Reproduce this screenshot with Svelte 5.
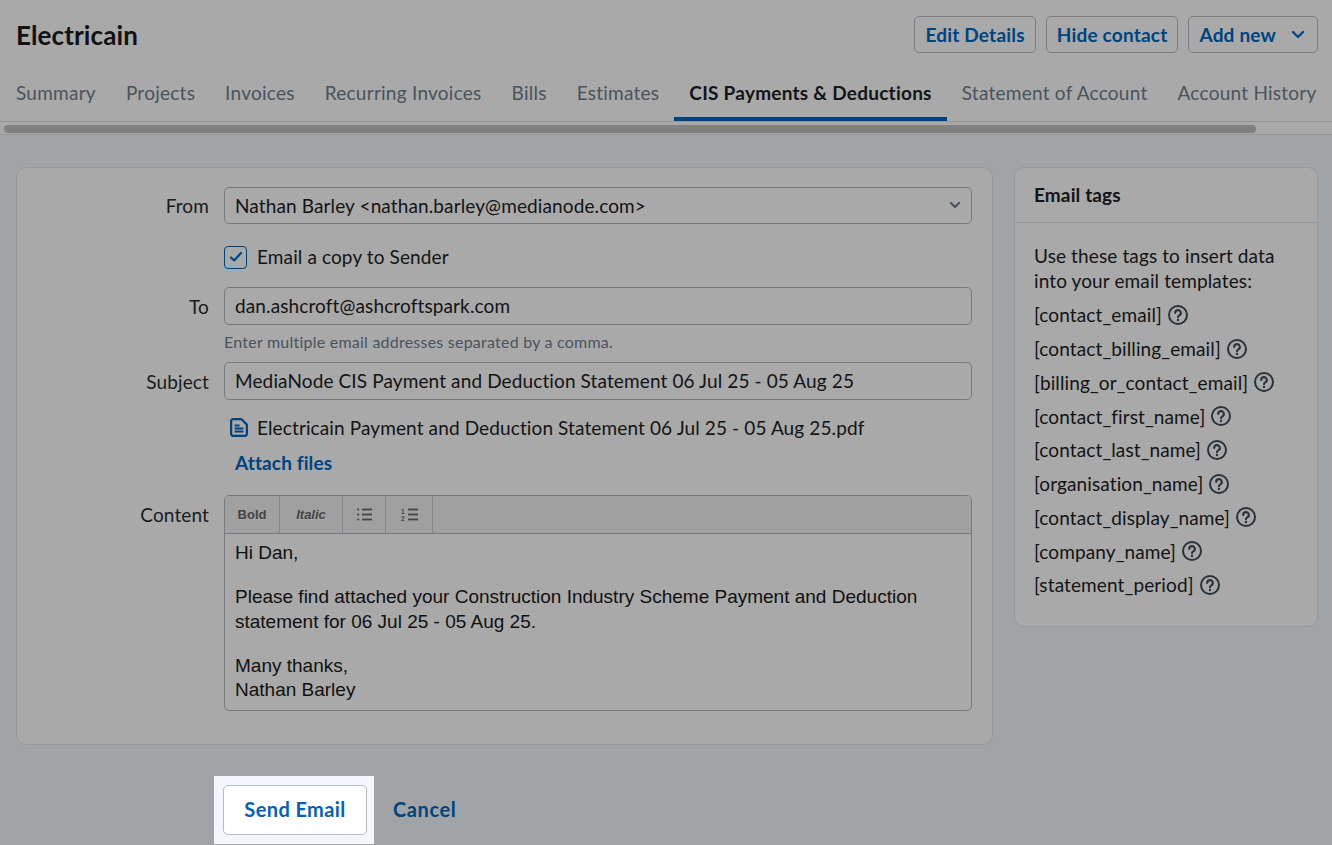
<script>
	const tabs = ['Summary', 'Projects', 'Invoices', 'Recurring Invoices', 'Bills', 'Estimates', 'CIS Payments & Deductions', 'Statement of Account', 'Account History'];
	const activeTab = 'CIS Payments & Deductions';
	const tags = ['contact_email', 'contact_billing_email', 'billing_or_contact_email', 'contact_first_name', 'contact_last_name', 'organisation_name', 'contact_display_name', 'company_name', 'statement_period'];
</script>

<div class="page">
	<header class="header">
		<div class="title-row">
			<h1>Electricain</h1>
			<div class="actions">
				<button class="btn" type="button">Edit Details</button>
				<button class="btn" type="button">Hide contact</button>
				<button class="btn add" type="button">
					Add new
					<svg width="14" height="9" viewBox="0 0 14 9" fill="none" stroke="currentColor" stroke-width="2.2" stroke-linecap="round" stroke-linejoin="round"><path d="M2 2l5 5 5-5"/></svg>
				</button>
			</div>
		</div>
		<nav class="tabs">
			{#each tabs as tab}
				<span class="tab" class:active={tab === activeTab}>{tab}</span>
			{/each}
		</nav>
		<div class="scroll-track"><div class="scroll-thumb"></div></div>
	</header>

	<main class="content">
		<section class="card form">
			<span class="label">From</span>
			<div class="field select">
				Nathan Barley &lt;nathan.barley@medianode.com&gt;
				<svg width="12" height="8" viewBox="0 0 12 8" fill="none" stroke="#6f7f8c" stroke-width="2.2" stroke-linecap="round" stroke-linejoin="round"><path d="M2 2l4 4 4-4"/></svg>
			</div>

			<div class="check-row">
				<span class="checkbox">
					<svg width="14" height="12" viewBox="0 0 14 12" fill="none" stroke="currentColor" stroke-width="2.2" stroke-linecap="round" stroke-linejoin="round"><path d="M2 6.5l3.2 3L12 2"/></svg>
				</span>
				Email a copy to Sender
			</div>

			<span class="label">To</span>
			<div class="field">dan.ashcroft@ashcroftspark.com</div>
			<p class="hint">Enter multiple email addresses separated by a comma.</p>

			<span class="label">Subject</span>
			<div class="field">MediaNode CIS Payment and Deduction Statement 06 Jul 25 - 05 Aug 25</div>

			<div class="attachment">
				<svg width="18" height="19" viewBox="0 0 18 19" fill="none" stroke="currentColor" stroke-width="2.2" stroke-linejoin="round"><path d="M1.1 3.2a2 2 0 0 1 2-2h8.4l5.4 5.4v9.2a2 2 0 0 1-2 2H3.1a2 2 0 0 1-2-2z"/><path d="M4.6 7.5h5M4.6 10.5h8.8M4.6 13.5h8.8" stroke-width="1.8"/></svg>
				<span>Electricain Payment and Deduction Statement 06 Jul 25 - 05 Aug 25.pdf</span>
			</div>
			<a class="attach" href="#attach">Attach files</a>

			<span class="label content-label">Content</span>
			<div class="editor">
				<div class="toolbar">
					<span class="tool bold">Bold</span>
					<span class="tool italic">Italic</span>
					<span class="tool list">
						<svg width="15" height="13" viewBox="0 0 15 13" fill="#666"><circle cx="1.2" cy="1.5" r="1.1"/><circle cx="1.2" cy="6.5" r="1.1"/><circle cx="1.2" cy="11.5" r="1.1"/><rect x="5" y="0.6" width="10" height="1.8"/><rect x="5" y="5.6" width="10" height="1.8"/><rect x="5" y="10.6" width="10" height="1.8"/></svg>
					</span>
					<span class="tool list">
						<svg width="17" height="13" viewBox="0 0 17 13" fill="#666"><text x="0" y="5.5" font-size="6.5" font-weight="700" font-family="Liberation Sans">1</text><text x="0" y="12.5" font-size="6.5" font-weight="700" font-family="Liberation Sans">2</text><rect x="7" y="0.6" width="10" height="1.8"/><rect x="7" y="5.6" width="10" height="1.8"/><rect x="7" y="10.6" width="10" height="1.8"/></svg>
					</span>
				</div>
				<div class="editor-body">
					<p>Hi Dan,</p>
					<p>Please find attached your Construction Industry Scheme Payment and Deduction statement for 06 Jul 25 - 05 Aug 25.</p>
					<p>Many thanks,<br>Nathan Barley</p>
				</div>
			</div>
		</section>

		<aside class="card tags">
			<h2>Email tags</h2>
			<div class="tags-body">
				<p>Use these tags to insert data into your email templates:</p>
				<ul>
					{#each tags as tag}
						<li>
							[{tag}]
							<svg width="20" height="20" viewBox="0 0 20 20" fill="none" stroke="#3f4d59" stroke-width="2"><circle cx="10" cy="10" r="9"/><path d="M7.2 7.9a2.8 2.8 0 1 1 4.1 2.5c-.9.5-1.3 1-1.3 1.8" stroke-width="2.1" stroke-linecap="round"/><circle cx="10" cy="15" r="1.2" fill="#3f4d59" stroke="none"/></svg>
						</li>
					{/each}
				</ul>
			</div>
		</aside>
	</main>

	<footer class="footer">
		<div class="highlight">
			<button class="send" type="button">Send Email</button>
		</div>
		<a class="cancel" href="#cancel">Cancel</a>
	</footer>

	<div class="overlay"></div>
</div>

<style>
	:global(body) {
		margin: 0;
		background: #f3f7fc;
	}

	.page {
		position: relative;
		height: 845px;
		overflow: hidden;
		font-family: Lato, "Noto Sans", sans-serif;
		font-size: 19px;
		letter-spacing: 0.12px;
		line-height: 25px;
		color: #1e2225;
		background: #f3f7fc;
	}

	.overlay {
		position: absolute;
		inset: 0;
		z-index: 1;
		background: rgba(0, 0, 0, 0.337);
	}

	.header {
		background: #fff;
	}

	.title-row {
		display: flex;
		justify-content: space-between;
		align-items: center;
		height: 74px;
		padding: 0 14px 0 16px;
	}

	h1 {
		margin: -3px 0 0;
		font-size: 26px;
		font-weight: 700;
		color: #1c1c1c;
	}

	.actions {
		display: flex;
		gap: 10px;
		margin-top: -5px;
	}

	.btn {
		height: 37px;
		padding: 0 10px;
		border: 1px solid #b4bfc9;
		border-radius: 5px;
		background: #fff;
		color: #0067c0;
		font: 700 19px Lato, sans-serif;
		letter-spacing: 0.2px;
	}

	.add {
		display: flex;
		align-items: center;
		gap: 15px;
		padding-right: 12px;
	}

	.tabs {
		display: flex;
		box-sizing: border-box;
		height: 48px;
		white-space: nowrap;
		overflow: hidden;
		border-bottom: 1px solid #dde3e8;
		letter-spacing: 0.25px;
	}

	.tab {
		flex: none;
		padding: 6px 15px 0;
		color: #6f7f8e;
	}

	.tab:first-child {
		padding-left: 16px;
	}

	.tab.active {
		color: #1e2225;
		font-weight: 700;
		border-bottom: 4px solid #0067c0;
	}

	.scroll-track {
		height: 13px;
		padding: 3px 76px 0 4px;
		box-sizing: border-box;
		border-bottom: 1px solid #dde3e8;
	}

	.scroll-thumb {
		height: 8px;
		border-radius: 4px;
		background: #c2c2c2;
	}

	.content {
		display: grid;
		grid-template-columns: 977px 304px;
		gap: 21px;
		align-items: start;
		padding: 32px 14px 0 16px;
	}

	.card {
		box-sizing: border-box;
		background: #fff;
		border: 1px solid #e2e7ec;
		border-radius: 10px;
	}

	.form {
		display: grid;
		grid-template-columns: 192px 748px;
		column-gap: 15px;
		padding: 19px 20px 33px 0;
		height: 578px;
		align-content: start;
	}

	.label {
		grid-column: 1;
		text-align: right;
		align-self: center;
		color: #2a2e31;
	}

	.field {
		grid-column: 2;
		box-sizing: border-box;
		display: flex;
		align-items: center;
		justify-content: space-between;
		height: 38px;
		padding: 0 11px 1px 10px;
		border: 1px solid #b0bac3;
		border-radius: 5px;
		background: #fff;
	}

	.select {
		height: 37px;
	}

	.select svg {
		margin-right: -1px;
	}

	.check-row {
		grid-column: 2;
		display: flex;
		align-items: center;
		gap: 10px;
		height: 24px;
		margin: 21px 0 18px;
		padding-bottom: 2px;
		box-sizing: border-box;
	}

	.checkbox {
		box-sizing: border-box;
		flex: none;
		display: flex;
		align-items: center;
		justify-content: center;
		width: 23px;
		height: 23px;
		margin-bottom: -2px;
		border: 1.5px solid #0067c0;
		border-radius: 4px;
		color: #0067c0;
	}

	.hint {
		grid-column: 2;
		margin: 6px 0 9px;
		font-size: 16px;
		letter-spacing: 0.23px;
		line-height: 22px;
		color: #6f7f8e;
	}

	.attachment {
		grid-column: 2;
		display: flex;
		align-items: center;
		gap: 9px;
		height: 26px;
		margin: 14px 0 0 5px;
		color: #1e2225;
	}

	.attachment svg {
		flex: none;
		margin-left: 1px;
		color: #0067c0;
	}

	.attach {
		grid-column: 2;
		margin: 10px 0 20px 11px;
		font-weight: 700;
		color: #0067c0;
		text-decoration: none;
	}

	.content-label {
		align-self: start;
		margin-top: 7px;
	}

	.editor {
		grid-column: 2;
		box-sizing: border-box;
		height: 216px;
		border: 1px solid #b0bac3;
		border-radius: 5px;
		overflow: hidden;
	}

	.toolbar {
		display: flex;
		height: 37px;
		background: #f2f2f2;
		border-bottom: 1px solid #b0bac3;
	}

	.tool {
		box-sizing: border-box;
		display: flex;
		align-items: center;
		justify-content: center;
		border-right: 1px solid #c4ccd3;
		font: 700 13px "Liberation Sans", sans-serif;
		letter-spacing: 0;
		color: #666;
		text-shadow: 0 1px 0 #fff;
	}

	.bold {
		width: 55px;
	}

	.italic {
		width: 63px;
		font-style: italic;
	}

	.list {
		width: 43px;
	}

	.list + .list {
		width: 47px;
	}

	.editor-body {
		padding: 7px 10px;
		font-family: "Liberation Sans", sans-serif;
		font-size: 19px;
		letter-spacing: 0;
		line-height: 24.5px;
		color: #1a1a1a;
	}

	.editor-body p {
		margin: 0 0 19.5px;
	}

	.tags {
		height: 460px;
	}

	h2 {
		margin: 0;
		height: 55px;
		box-sizing: border-box;
		padding: 14px 19px 0;
		font-size: 19px;
		line-height: 25px;
		font-weight: 700;
		border-bottom: 1px solid #e2e7ec;
	}

	.tags-body {
		padding: 20px 19px;
	}

	.tags-body p {
		margin: 0 0 5px;
	}

	ul {
		margin: 0;
		padding: 0;
		list-style: none;
	}

	li {
		display: flex;
		align-items: center;
		gap: 6px;
		height: 33.75px;
	}

	.footer {
		display: flex;
		align-items: center;
		gap: 19px;
		padding: 31px 0 0 214px;
	}

	.highlight {
		position: relative;
		z-index: 2;
		padding: 9px 7px 9px 9px;
		background: #f3f7fc;
	}

	.send {
		display: block;
		width: 144px;
		height: 50px;
		padding-bottom: 3px;
		border: 1px solid #b4bcc5;
		border-radius: 5px;
		background: #fff;
		color: #0561b8;
		font: 700 20px Lato, sans-serif;
		letter-spacing: 0.4px;
	}

	.cancel {
		margin-top: -2px;
		font-size: 20px;
		font-weight: 700;
		letter-spacing: 0.6px;
		color: #0067c0;
		text-decoration: none;
	}
</style>
